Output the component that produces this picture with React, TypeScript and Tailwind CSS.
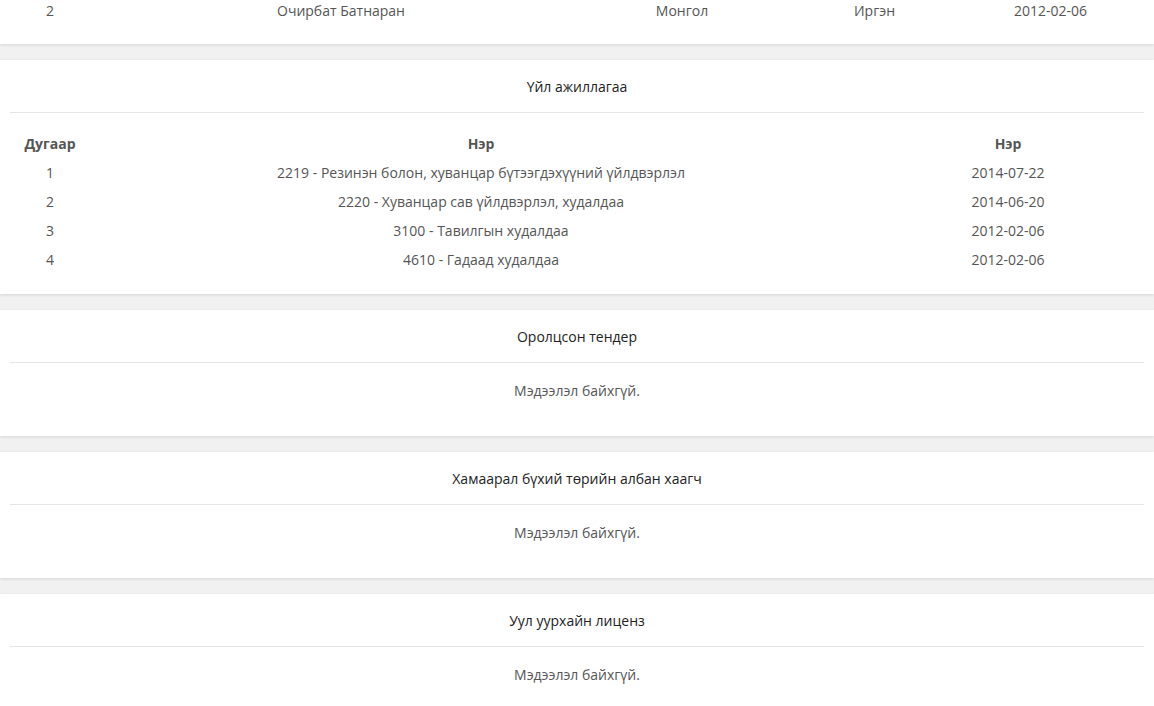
const font = { fontFamily: '"Open Sans", "Noto Sans", sans-serif' };

function Card({ title, children }: { title: string; children: React.ReactNode }) {
  return (
    <div className="shrink-0 bg-white shadow-[0_1px_3px_rgba(0,0,0,0.12)]">
      <div className="h-[52px] flex items-center justify-center text-[14px] text-[#222]">{title}</div>
      <div className="mx-[10px] border-t border-[#e5e5e5]" />
      {children}
    </div>
  );
}

function Empty() {
  return <div className="h-[73px] pt-[17px] text-center text-[14px] text-[#555]">Мэдээлэл байхгүй.</div>;
}

const acts = [
  ['1', '2219 - Резинэн болон, хуванцар бүтээгдэхүүний үйлдвэрлэл', '2014-07-22'],
  ['2', '2220 - Хуванцар сав үйлдвэрлэл, худалдаа', '2014-06-20'],
  ['3', '3100 - Тавилгын худалдаа', '2012-02-06'],
  ['4', '4610 - Гадаад худалдаа', '2012-02-06'],
];

export default function App() {
  return (
    <div className="bg-[#f1f1f1] h-[706px] overflow-hidden flex flex-col gap-4 text-[14px] text-[#555]" style={font}>
      <div className="shrink-0 bg-white h-[44px] shadow-[0_1px_3px_rgba(0,0,0,0.12)] grid grid-cols-[100px_482px_200px_185px_1fr] items-start">
        <div className="text-center">2</div>
        <div className="text-center">Очирбат Батнаран</div>
        <div className="text-center">Монгол</div>
        <div className="text-center">Иргэн</div>
        <div className="text-center pr-[20px]">2012-02-06</div>
      </div>
      <Card title="Үйл ажиллагаа">
        <div className="px-[10px] pt-[16px] pb-[20px]">
          <div className="grid grid-cols-[80px_1fr_272px] h-[29px] items-center font-bold">
            <div className="text-center">Дугаар</div>
            <div className="text-center">Нэр</div>
            <div className="text-center">Нэр</div>
          </div>
          {acts.map((r) => (
            <div key={r[0]} className="grid grid-cols-[80px_1fr_272px] h-[29px] items-center">
              <div className="text-center">{r[0]}</div>
              <div className="text-center">{r[1]}</div>
              <div className="text-center">{r[2]}</div>
            </div>
          ))}
        </div>
      </Card>
      <Card title="Оролцсон тендер"><Empty /></Card>
      <Card title="Хамаарал бүхий төрийн албан хаагч"><Empty /></Card>
      <Card title="Уул уурхайн лиценз"><Empty /></Card>
    </div>
  );
}
